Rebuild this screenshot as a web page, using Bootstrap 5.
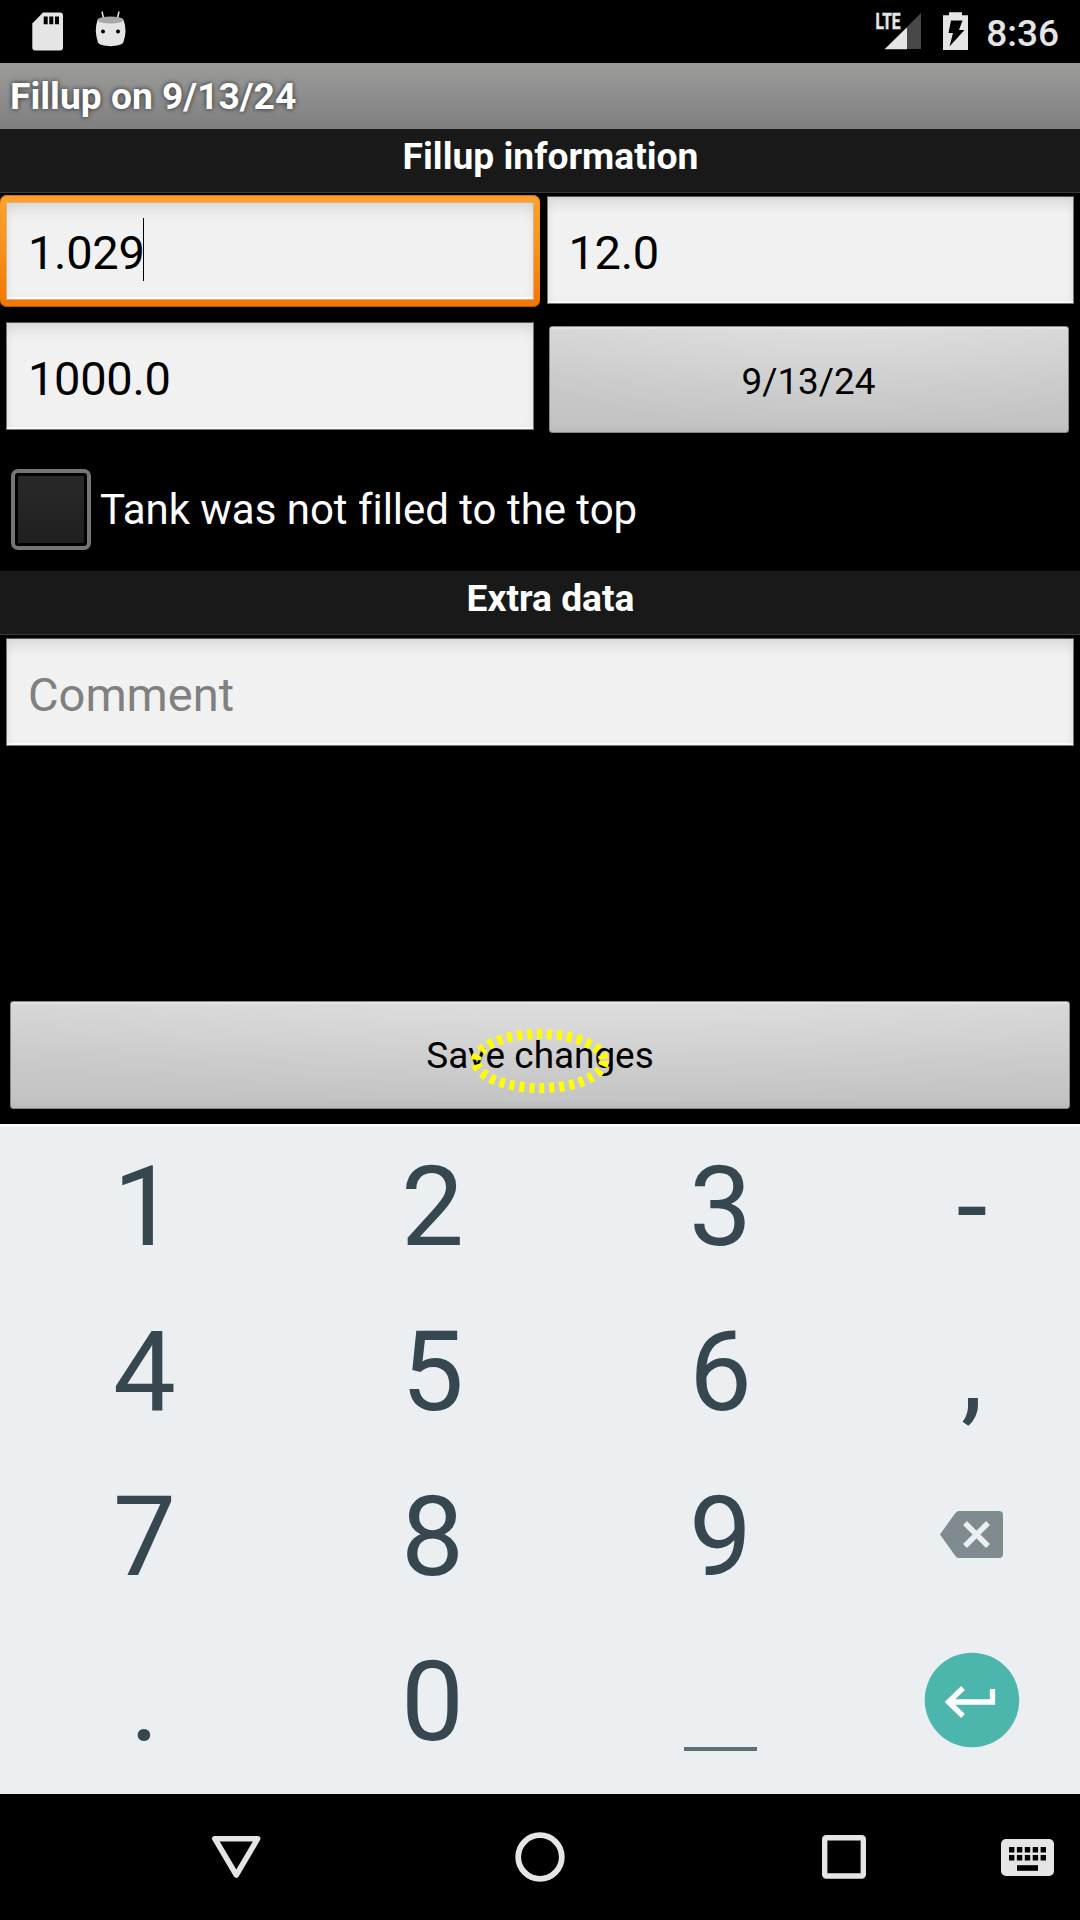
<!DOCTYPE html>
<html lang="en">
<head>
<meta charset="utf-8">
<meta name="viewport" content="width=device-width, initial-scale=1">
<title>Fillup on 9/13/24</title>
<link href="https://cdn.jsdelivr.net/npm/bootstrap@5.3.0/dist/css/bootstrap.min.css" rel="stylesheet">
<style>
  body { font-family: Roboto, "Liberation Sans", sans-serif; background: #000; color: #fff; }
  .phone { width: 1080px; height: 1920px; overflow: hidden; }
  .status { height: 63px; }
  .status svg, .navkeys svg, .pad svg { display: block; }
  .clock { font-size: 37px; font-weight: 500; color: #e5e5e5; line-height: 42px; padding: 13px 21px 0 0; }
  .titlebar { height: 66px; padding: 12px 0 0 10px; font-size: 37.2px; line-height: 43px; font-weight: 700;
    background: linear-gradient(#9b9b98, #929292 35%, #7f7f7f); text-shadow: 0 0 5px rgba(0,0,0,.75); }
  .section { height: 64px; padding: 6px 0 0 21px; font-size: 37.2px; line-height: 43px; font-weight: 700;
    background: #191919; border-bottom: 1px solid #3a3a3a; }
  .fields { height: 251px; padding: 3px 6px 0 6px; }
  .field.form-control { height: 108px; border: 1px solid #777; border-top-color: #555; border-radius: 0; color: #000;
    font-size: 47px; letter-spacing: -.3px; line-height: 56px; padding: 4px 20px 0 21px;
    background: #f1f1f1; box-shadow: inset 0 12px 14px -5px rgba(0,0,0,.09), inset 0 0 8px rgba(0,0,0,.05), inset 0 -2px 1px #fff; }
  .field::placeholder { color: #808080; opacity: 1; letter-spacing: 0; }
  .half { width: 527.5px; }
  .lower { margin-top: 18px; }
  .focused { position: relative; }
  .focused::before { content: ""; position: absolute; inset: -1.5px -6px -3px -6px; border-radius: 7px;
    background: linear-gradient(#ffa02e, #fb9725 35%, #f27600); box-shadow: inset 0 -1px 0 #b85a00, inset 0 1px 1px #c87a1e; }
  .focused .field.form-control { position: relative; height: 98px; margin-top: 6px; border-color: #dcae78; padding-top: 2px; }
  .caret { position: absolute; left: 137px; top: 22px; width: 1px; height: 63px; background: #000; }
  .graybtn.btn { height: 107px; border: 1px solid #888; border-radius: 3px; color: #000; font-size: 36.9px; line-height: 43px; padding: 3px 0 0;
    background: radial-gradient(ellipse 70% 100% at 55% 0, rgba(255,255,255,.22), rgba(255,255,255,0)), linear-gradient(#d5d5d5, #cacaca 50%, #c3c3c3 92%, #bbb);
    box-shadow: inset 0 2px 1px rgba(255,255,255,.3); }
  .datebtn.btn { width: 520px; margin-top: 4px; margin-right: 5px; padding-right: 1px; }
  .checkrow { height: 127px; padding: 25px 0 0 11px; gap: 9px; font-size: 42px; line-height: 50px; }
  .tick.form-check-input { width: 80px; height: 81px; margin: 0; border: 4px solid #757575; border-radius: 7px; flex: none;
    background: linear-gradient(#292929, #202020) content-box, #000; padding: 3px; }
  .ticktext { letter-spacing: -.03px; }
  .extra { height: 489px; padding: 3px 6px 0; }
  .save.btn { width: 1060px; height: 108px; margin: 255px 0 0 4px; padding-top: 1px; }
  .ring { position: absolute; left: 50%; top: 50%; transform: translate(-50%,-50%); margin-top: 6px; }
  .pad { height: 670px; background: #ebeff2; border-top: 3px solid #f7f9fa; color: #37474f; font-size: 112px; line-height: 130px; }
  .keyrow { height: 165px; }
  .digit, .side { height: 165px; }
  .digit { width: 288px; padding: 15px 0 0 1px; }
  .side { width: 216px; }
  .sym { padding-top: 15px; }
  .spacebar { width: 73px; height: 4px; background: #5f6d74; margin: 110px auto 0; }
  .navkeys { height: 126px; }
</style>
</head>
<body>
<main class="phone d-flex flex-column">
  <header class="status d-flex">
    <svg width="140" height="63" viewBox="0 0 140 63">
      <path d="M43 12.500H60a3 3 0 0 1 3 3V47.500a3 3 0 0 1-3 3H35.300a3 3 0 0 1-3-3V23.500Z" fill="#e5e5e5"/>
      <path d="M43.700 16.500h4v7.800h-4zM49.300 16.500h4v7.800h-4zM55 16.500h4v7.800h-4z" fill="#000"/>
      <path d="M102 11.500l2 9M119 11.500l-2 9" stroke="#e5e5e5" stroke-width="1.500"/>
      <path d="M97.500 20Q94 30 97.800 42C99 47.500 122 47.500 123.500 42Q127.500 30 123.500 20Z" fill="#e5e5e5"/>
      <ellipse cx="110.500" cy="20" rx="13" ry="3.400" fill="#a8a8a8"/>
      <circle cx="103" cy="31.500" r="2" fill="#000"/><circle cx="118" cy="31.500" r="2" fill="#000"/>
    </svg>
    <svg class="ms-auto" width="116" height="63" viewBox="870 0 116 63">
      <text x="875.500" y="28.800" font-size="21.500" font-weight="700" textLength="25" lengthAdjust="spacingAndGlyphs" fill="#e5e5e5" stroke="#e5e5e5" stroke-width=".5" font-family="Roboto">LTE</text>
      <path d="M921 13V49H907V27Z" fill="#484848"/>
      <path d="M884.500 49.200L907 27.200V49.200Z" fill="#e5e5e5"/>
      <path d="M949 12.200h13v3h6V50h-25V15.200h6Z" fill="#e5e5e5"/>
      <path d="M951 20.500h11.500l-3.500 9.500h5.500L949.500 46.500l3.500-13.500h-4.500Z" fill="#000"/>
    </svg>
    <div class="clock">8:36</div>
  </header>
  <div class="titlebar">Fillup on 9/13/24</div>

  <h2 class="section text-center mb-0">Fillup information</h2>
  <section class="fields">
    <div class="d-flex justify-content-between">
      <div class="half focused"><input class="form-control field" value="1.029" aria-label="Volume"><span class="caret"></span></div>
      <div class="half"><input class="form-control field" value="12.0" aria-label="Price"></div>
    </div>
    <div class="d-flex justify-content-between lower">
      <div class="half"><input class="form-control field" value="1000.0" aria-label="Odometer"></div>
      <button class="btn graybtn datebtn">9/13/24</button>
    </div>
  </section>
  <label class="checkrow d-flex"><input type="checkbox" class="form-check-input tick"><span class="ticktext pt-3">Tank was not filled to the top</span></label>

  <h2 class="section text-center mb-0">Extra data</h2>
  <section class="extra">
    <input class="form-control field" placeholder="Comment" aria-label="Comment">
    <button class="btn graybtn save position-relative">Save changes
      <svg class="ring" width="150" height="76" viewBox="-75 -38 150 76"><ellipse rx="64" ry="27" fill="none" stroke="#ff0" stroke-width="10" stroke-dasharray="5 5"/></svg>
    </button>
  </section>

  <section class="pad text-center">
    <div class="keyrow d-flex"><div class="digit">1</div><div class="digit">2</div><div class="digit">3</div><div class="side sym">-</div></div>
    <div class="keyrow d-flex"><div class="digit">4</div><div class="digit">5</div><div class="digit">6</div><div class="side sym">,</div></div>
    <div class="keyrow d-flex"><div class="digit">7</div><div class="digit">8</div><div class="digit">9</div>
      <div class="side"><svg width="216" height="165" viewBox="864 1457 216 165">
        <path d="M959 1511H999a4 4 0 0 1 4 4V1554a4 4 0 0 1-4 4H959q-2.500 0-4-2.500L940 1534.500L955 1513.500q1.500-2.500 4-2.500Z" fill="#808b90"/>
        <path d="M965 1523l23 23m0-23l-23 23" stroke="#ebeff2" stroke-width="5.500"/>
      </svg></div></div>
    <div class="keyrow d-flex"><div class="digit">.</div><div class="digit">0</div><div class="digit"><div class="spacebar"></div></div>
      <div class="side"><svg width="216" height="165" viewBox="864 1622 216 165">
        <circle cx="972" cy="1700" r="47.300" fill="#4db6ac"/>
        <path d="M992.500 1689V1702H949M963 1688L948.500 1702L963 1716" fill="none" stroke="#fff" stroke-width="5.300"/>
      </svg></div></div>
  </section>

  <footer class="navkeys">
    <svg width="1080" height="126" viewBox="0 1794 1080 126" fill="none" stroke="#e5e5e5">
      <path d="M214.800 1838.700H257.700L236.300 1875Z" stroke-width="5.500" stroke-linejoin="round"/>
      <circle cx="540" cy="1857" r="21.800" stroke-width="5.800"/>
      <rect x="824.700" y="1837.800" width="38.600" height="38.200" rx="1.500" stroke-width="5.400"/>
      <rect x="1001" y="1839" width="53" height="37" rx="5" fill="#e5e5e5" stroke="none"/>
      <path d="M1009 1849.800H1047M1009 1857.800H1047" stroke="#000" stroke-width="5.600" stroke-dasharray="5.400 2.500"/>
      <path d="M1017 1868h21" stroke="#000" stroke-width="5.600"/>
    </svg>
  </footer>
</main>
<script src="https://cdn.jsdelivr.net/npm/bootstrap@5.3.0/dist/js/bootstrap.bundle.min.js"></script>
</body>
</html>
